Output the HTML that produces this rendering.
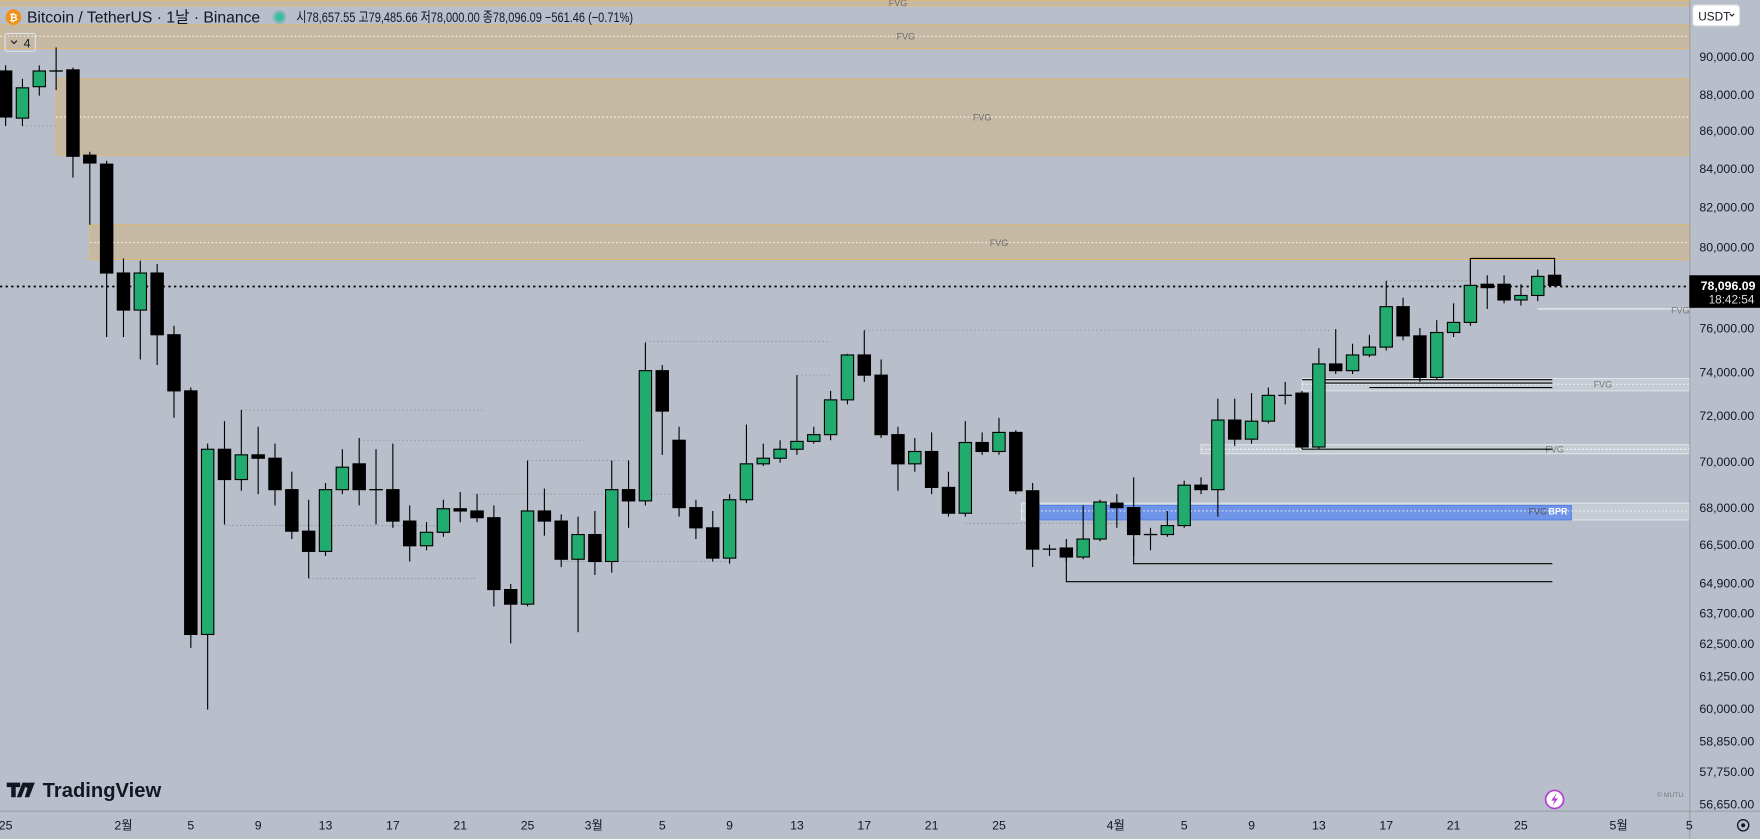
<!DOCTYPE html>
<html><head><meta charset="utf-8"><style>
html,body{margin:0;padding:0;background:#b8bfca;overflow:hidden}
svg{display:block}
text{font-family:"Liberation Sans","Noto Sans CJK KR",sans-serif}
</style></head><body>
<svg id="s" width="1760" height="839" viewBox="0 0 1568 747" xmlns="http://www.w3.org/2000/svg">
<rect width="1568" height="747" fill="#b8bfca"/>
<g id="zones">
<rect x="0" y="0" width="1505" height="5" fill="#c5b9a3" stroke="#e3b66b" stroke-width="0.8"/>
<rect x="0" y="22" width="1505" height="21" fill="#c5b9a3" stroke="#e3b66b" stroke-width="0.8"/>
<rect x="50" y="70" width="1455" height="68" fill="#c5b9a3" stroke="#e3b66b" stroke-width="0.8"/>
<line x1="50" y1="104" x2="1505" y2="104" stroke="#fff" stroke-dasharray="1.5 2" stroke-width="0.8"/>
<line x1="0" y1="32" x2="1505" y2="32" stroke="#fff" stroke-dasharray="1.5 2" stroke-width="0.8"/>
<rect x="80" y="200" width="1425" height="31" fill="#c5b9a3" stroke="#e3b66b" stroke-width="0.8"/>
<line x1="80" y1="216" x2="1505" y2="216" stroke="#fff" stroke-dasharray="1.5 2" stroke-width="0.8"/>
<text x="800" y="5" font-size="8" fill="#6b6b6b" text-anchor="middle">FVG</text>
<text x="807" y="35" font-size="8" fill="#6b6b6b" text-anchor="middle">FVG</text>
<text x="875" y="107" font-size="8" fill="#6b6b6b" text-anchor="middle">FVG</text>
<text x="890" y="219" font-size="8" fill="#6b6b6b" text-anchor="middle">FVG</text>
<rect x="1160" y="337" width="345" height="11" fill="#c6ccd3" stroke="#e6e9ee" stroke-width="0.8"/>
<line x1="1160" y1="342" x2="1505" y2="342" stroke="#fff" stroke-dasharray="1.5 2" stroke-width="0.8"/>
<text x="1428" y="345" font-size="8" fill="#777" text-anchor="middle">FVG</text>
<rect x="1070" y="396" width="435" height="8" fill="#c6ccd3" stroke="#e6e9ee" stroke-width="0.8"/>
<line x1="1070" y1="400" x2="1505" y2="400" stroke="#fff" stroke-dasharray="1.5 2" stroke-width="0.8"/>
<text x="1385" y="403" font-size="8" fill="#777" text-anchor="middle">FVG</text>
<rect x="910" y="448" width="595" height="15" fill="#c6ccd3" stroke="#e6e9ee" stroke-width="0.8"/>
<rect x="925" y="450" width="475" height="13" fill="#6f93e6" stroke="#4f7fe6" stroke-width="0.8"/>
<line x1="910" y1="455" x2="1505" y2="455" stroke="#fff" stroke-dasharray="1.5 2" stroke-width="0.8"/>
<text x="1370" y="458" font-size="8" fill="#555" text-anchor="middle">FVG</text>
<text x="1388" y="458" font-size="8" fill="#fff" font-weight="bold" text-anchor="middle">BPR</text>
<line x1="1370" y1="275" x2="1505" y2="275" stroke="#fff" stroke-width="0.8"/>
<text x="1497" y="279" font-size="8" fill="#777" text-anchor="middle">FVG</text>
</g>
<g stroke="#000" stroke-width="1" fill="none">
<path d="M1160 338H1383M1220 345H1383M1160 400H1383M1010 480V502H1383M950 496V518H1383M1310 250V230H1385V245"/>
<path d="M1170 341H1383"/>
</g>
<g stroke="#8e949c" stroke-width="0.7" stroke-dasharray="1.5 2" fill="none">
<path d="M275 515H425M215 365H430M320 392H520M575 304H740M770 294H1185M420 440H600M650 500H500M860 466H1000M1235 250H1310M20 112H50M200 468H400M470 410H560M710 334H740"/>
</g>
<line x1="0" y1="255" x2="1505" y2="255" stroke="#000" stroke-width="1.5" stroke-dasharray="2 3"/>
<g id="c"></g>
<circle cx="12" cy="15" r="7" fill="#f0931a"/>
<text x="12" y="18.5" font-size="9" fill="#fff" text-anchor="middle" font-weight="bold">₿</text>
<text x="24" y="20" font-size="14" fill="#131722">Bitcoin / TetherUS · 1날 · Binance</text>
<circle cx="249" cy="15" r="6" fill="#7fb8b0"/><circle cx="249" cy="15" r="3.5" fill="#30c0a0"/>
<text x="264" y="19.5" font-size="12.5" fill="#131722" textLength="300" lengthAdjust="spacingAndGlyphs">시78,657.55 고79,485.66 저78,000.00 종78,096.09 −561.46 (−0.71%)</text>
<rect x="4.5" y="29.5" width="27" height="16" rx="2" fill="none" stroke="#e0e3e8"/>
<path d="M10 36l2.5 2.5 2.5-2.5" stroke="#131722" fill="none"/>
<text x="21" y="42" font-size="11" fill="#131722">4</text>
<line x1="1505.5" y1="0" x2="1505.5" y2="747" stroke="#9aa0a8"/>
<line x1="0" y1="722.5" x2="1568" y2="722.5" stroke="#9aa0a8"/>
<rect x="1508" y="4" width="42" height="19" rx="3" fill="#fff" stroke="#d0d3d8"/>
<text x="1513" y="18" font-size="10.5" fill="#131722">USDT</text>
<path d="M1541 12l2 2 2-2" stroke="#131722" fill="none"/>
<g font-size="11" fill="#131722" id="ax"></g>
<rect x="1505" y="245" width="63" height="29" fill="#000"/>
<text x="1564" y="258" font-size="11" fill="#fff" text-anchor="end" font-weight="bold">78,096.09</text>
<text x="1563" y="270" font-size="10.5" fill="#ddd" text-anchor="end">18:42:54</text>
<g font-size="11" fill="#131722" text-anchor="middle" id="dx"></g>
<circle cx="1553" cy="735" r="5" fill="none" stroke="#131722" stroke-width="1.2"/><circle cx="1553" cy="735" r="1.8" fill="#131722"/>
<path d="M6 697h12v4h-4v9h-4v-9H6zM20 697h4l-5 13h-4z" fill="#131722"/><circle cx="25" cy="699.5" r="2.5" fill="#131722"/>
<path d="M26 697h5l-5 13h-4z" fill="#131722"/>
<text x="38" y="710" font-size="18" font-weight="bold" fill="#131722">TradingView</text>
<circle cx="1385" cy="712" r="8" fill="#fff" stroke="#b43ad8" stroke-width="1.5"/>
<path d="M1387 706l-5 7h3l-2 5 5-7h-3z" fill="#b43ad8"/>
<text x="1488" y="710" font-size="6" fill="#777" text-anchor="middle">© MUTU</text>
</svg>
<script>
var d=[
[5,'b',63,104,58,112],[20,'g',105,78,70,112],[35,'g',77,63,58,85],[50,'d',63,63,42,80],
[65,'b',62,139,60,158],[80,'b',138,145,135,200],[95,'b',146,243,143,300],[110,'b',243,276,230,300],
[125,'g',276,243,232,320],[140,'b',243,298,235,325],[155,'b',298,348,290,372],[170,'b',348,565,345,577],
[185,'g',565,400,632,395],[200,'b',400,427,375,467],[215,'g',427,405,437,365],[230,'b',405,408,380,440],
[245,'b',408,436,395,450],[260,'b',436,473,420,480],[275,'b',473,491,445,515],[290,'g',491,436,495,430],
[305,'g',436,416,440,400],[320,'b',413,436,390,450],[335,'d',436,436,400,467],[350,'b',436,464,395,470],
[365,'b',464,486,450,500],[380,'g',486,474,490,465],[395,'g',474,453,478,445],[410,'b',453,455,438,465],
[425,'b',455,461,440,465],[440,'b',461,525,450,540],[455,'b',525,538,520,573],[470,'g',538,455,540,410],
[485,'b',455,464,435,477],[500,'b',464,498,458,505],[515,'g',498,476,563,460],[530,'b',476,500,455,512],
[545,'g',500,436,510,410],[560,'b',436,446,410,470],[575,'g',446,330,450,305],[590,'b',330,366,325,405],
[605,'b',392,452,380,460],[620,'b',452,470,445,480],[635,'b',470,497,455,500],[650,'g',497,445,502,440],
[665,'g',445,413,448,378],[680,'g',413,408,415,395],[695,'g',408,400,412,392],[710,'g',400,393,405,334],
[725,'g',393,387,395,380],[740,'g',387,356,392,348],[755,'g',356,316,360,315],[770,'b',316,334,294,340],
[785,'b',334,387,320,390],[800,'b',387,413,380,437],[815,'g',413,402,420,390],[830,'b',402,434,385,440],
[845,'b',434,457,420,460],[860,'g',457,394,460,375],[875,'b',394,402,385,405],[890,'g',402,385,405,372],
[905,'b',385,437,383,440],[920,'b',437,489,430,505],[935,'d',489,489,485,495],[950,'b',488,496,480,500],
[965,'g',496,480,498,450],[980,'g',480,447,482,445],[995,'b',448,452,440,470],[1010,'b',452,476,425,495],
[1025,'d',476,476,470,490],[1040,'g',476,468,478,455],[1055,'g',468,432,470,428],[1070,'b',432,436,425,440],
[1085,'g',436,374,460,355],[1100,'b',374,391,355,397],[1115,'g',391,375,395,350],[1130,'g',375,352,377,345],
[1145,'d',352,352,340,360],[1160,'b',350,398,348,400],[1175,'g',398,324,400,310],[1190,'b',324,330,293,333],
[1205,'g',330,316,333,306],[1220,'g',316,309,318,298],[1235,'g',309,273,312,250],[1250,'b',273,299,265,303],
[1265,'b',299,336,292,340],[1280,'g',336,296,338,285],[1295,'g',296,287,300,270],[1310,'g',287,254,290,230],
[1325,'b',253,256,245,275],[1340,'b',253,267,245,270],[1355,'g',267,263,272,253],[1370,'g',263,246,268,240],
[1385,'b',245,254,238,255]];
var h='';
d.forEach(function(c){var x=c[0],t=Math.min(c[2],c[3]),bt=Math.max(c[2],c[3]);var lo=Math.max(c[4],c[5]),hi=Math.min(c[4],c[5]);
h+='<line x1="'+x+'" x2="'+x+'" y1="'+hi+'" y2="'+lo+'" stroke="#000" stroke-width="1"/>';
if(c[1]=='d'){h+='<line x1="'+(x-6)+'" x2="'+(x+6)+'" y1="'+t+'" y2="'+t+'" stroke="#000" stroke-width="1.2"/>';}
else h+='<rect x="'+(x-5.5)+'" y="'+t+'" width="11" height="'+Math.max(bt-t,2)+'" fill="'+(c[1]=='g'?'#22ab6e':'#000')+'" stroke="#000" stroke-width="1"/>';});
document.getElementById('c').innerHTML=h;
var ax=[['90,000.00',50],['88,000.00',84],['86,000.00',116],['84,000.00',150],['82,000.00',184],['80,000.00',220],['76,000.00',292],['74,000.00',331],['72,000.00',370],['70,000.00',411],['68,000.00',452],['66,500.00',485],['64,900.00',519],['63,700.00',546],['62,500.00',573],['61,250.00',602],['60,000.00',631],['58,850.00',660],['57,750.00',687],['56,650.00',716]];
document.getElementById('ax').innerHTML=ax.map(function(a){return '<text x="1514" y="'+(a[1]+4)+'">'+a[0]+'</text>'}).join('');
var dx=[['25',5],['2월',110],['5',170],['9',230],['13',290],['17',350],['21',410],['25',470],['3월',529],['5',590],['9',650],['13',710],['17',770],['21',830],['25',890],['4월',994],['5',1055],['9',1115],['13',1175],['17',1235],['21',1295],['25',1355],['5월',1442],['5',1505]];
document.getElementById('dx').innerHTML=dx.map(function(a){return '<text x="'+a[1]+'" y="739"'+(a[0].length>2?' font-weight="bold"':'')+'>'+a[0]+'</text>'}).join('');
</script>
</body></html>
